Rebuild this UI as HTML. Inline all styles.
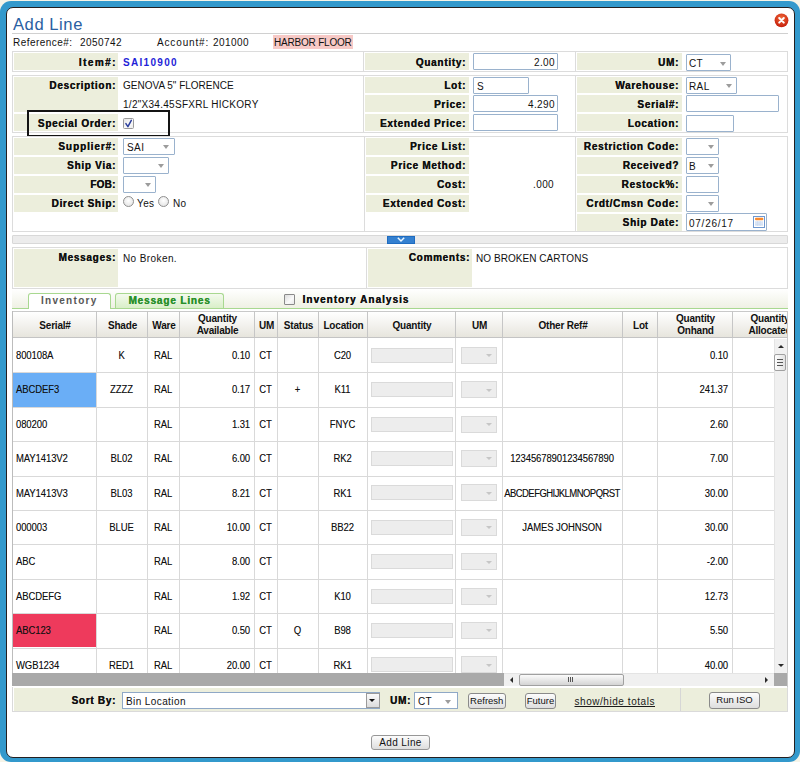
<!DOCTYPE html>
<html><head><meta charset="utf-8">
<style>
*{box-sizing:border-box;margin:0;padding:0}
html,body{width:800px;height:762px;overflow:hidden;background:#f6f4e8;font-family:"Liberation Sans",sans-serif;color:#111}
.a{position:absolute}
#frame{position:absolute;left:0;top:1px;width:800px;height:761px;background:#3399cc;border-radius:11px}
#inner{position:absolute;left:6px;top:7px;width:789px;height:751px;background:#fff;border:1.5px solid #231f20;border-radius:7px}
.t{position:absolute;white-space:pre;font-size:10px;line-height:12px;margin-top:1px}
.lb{text-shadow:0.25px 0 0 currentColor;position:absolute;white-space:pre;font-size:10px;line-height:12px;font-weight:bold;letter-spacing:0.7px;text-align:right;margin-top:0.8px}
.bg{position:absolute;background:#eceedc}
.box{position:absolute;border:1px solid #dcdcdc}
.vl{position:absolute;width:1px;background:#dcdcdc}
.inp{position:absolute;border:1px solid #9ab2cd;background:#fff;border-radius:1px}
.sel{position:absolute;border:1px solid #9ab2cd;background:#fff;border-radius:1px}
.arr{position:absolute;width:0;height:0;border-left:3.5px solid transparent;border-right:3.5px solid transparent;border-top:4px solid #9c9c9c;margin-left:0.5px;margin-top:0.5px}
.gh{background:linear-gradient(#ffffff,#e6e4dc)}
.gt{font-size:10px;line-height:11.2px;font-weight:bold;text-align:center;color:#111;letter-spacing:-0.2px}
.gd{font-size:9.5px;line-height:11px;white-space:pre;color:#111;letter-spacing:-0.1px;text-shadow:0.1px 0 0 rgba(0,0,0,0.35);transform:translateY(0.5px) scaleY(1.14);transform-origin:0 8.8px}
.dis{background:#ededed;border:1px solid #dadada}
.btn{border:1px solid #8a8a8a;border-radius:3px;background:linear-gradient(#fcfcfc,#dedede);font-size:9.5px;line-height:13px;text-align:center;color:#111;white-space:pre}
</style></head><body>
<div id="frame"></div>
<div id="inner"></div>

<!-- close icon -->
<svg class="a" style="left:774px;top:12.8px" width="15" height="15" viewBox="0 0 15 15">
<defs><radialGradient id="cg" cx="50%" cy="35%" r="60%"><stop offset="0" stop-color="#f26a3a"/><stop offset="1" stop-color="#c8240f"/></radialGradient></defs>
<circle cx="7.5" cy="7.3" r="6.9" fill="url(#cg)"/>
<path d="M5.2 5L9.8 9.6M9.8 5L5.2 9.6" stroke="#fff" stroke-width="2" stroke-linecap="round"/>
</svg>

<div class="t" style="left:13px;top:13.5px;font-size:16.6px;line-height:20px;color:#2a60a2;letter-spacing:0.55px">Add Line</div>
<div class="a" style="left:12px;top:33px;width:776px;height:1px;background:#d0d0d0"></div>

<div class="t" style="left:13px;top:36px;letter-spacing:0.45px">Reference#:</div>
<div class="t" style="left:80px;top:36px;letter-spacing:0.45px">2050742</div>
<div class="t" style="left:157px;top:36px;letter-spacing:0.85px">Account#:</div>
<div class="t" style="left:213px;top:36px;letter-spacing:0.45px">201000</div>
<div class="a" style="left:273px;top:35px;width:80px;height:14px;background:#f7c9c6"></div>
<div class="t" style="left:274px;top:36px;letter-spacing:-0.2px">HARBOR FLOOR</div>


<!-- ROW 1 -->
<div class="box" style="left:12px;top:51px;width:776px;height:21px"></div>
<div class="vl" style="left:363px;top:52px;height:19px"></div>
<div class="vl" style="left:575px;top:52px;height:19px"></div>
<div class="bg" style="left:14px;top:53px;width:104px;height:17px"></div>
<div class="bg" style="left:365px;top:53px;width:104px;height:17px"></div>
<div class="bg" style="left:577px;top:53px;width:105px;height:17px"></div>
<div class="lb" style="right:683.3px;top:56px;letter-spacing:1.4px">Item#:</div>
<div class="t" style="left:123px;top:56px;font-weight:bold;color:#1f1fd8;letter-spacing:1.3px">SAI10900</div>
<div class="lb" style="right:334px;top:56px">Quantity:</div>
<div class="inp" style="left:473px;top:53px;width:85px;height:17px"></div>
<div class="t" style="right:245px;top:56px;letter-spacing:0.4px">2.00</div>
<div class="lb" style="right:121px;top:56px">UM:</div>
<div class="sel" style="left:686px;top:54px;width:45px;height:17px"></div>
<div class="t" style="left:689px;top:57px;letter-spacing:0.4px">CT</div>
<div class="arr" style="left:719px;top:61px"></div>

<!-- ROW 2 -->
<div class="box" style="left:12px;top:75px;width:776px;height:58px"></div>
<div class="vl" style="left:363px;top:76px;height:56px"></div>
<div class="vl" style="left:575px;top:76px;height:56px"></div>
<div class="bg" style="left:14px;top:77px;width:104px;height:35px"></div>
<div class="bg" style="left:14px;top:114px;width:104px;height:17px"></div>
<div class="bg" style="left:365px;top:77px;width:104px;height:16px"></div>
<div class="bg" style="left:365px;top:95px;width:104px;height:17px"></div>
<div class="bg" style="left:365px;top:114px;width:104px;height:17px"></div>
<div class="bg" style="left:577px;top:77px;width:105px;height:16px"></div>
<div class="bg" style="left:577px;top:95px;width:105px;height:17px"></div>
<div class="bg" style="left:577px;top:114px;width:105px;height:17px"></div>
<div class="lb" style="right:684px;top:79px">Description:</div>
<div class="t" style="left:123px;top:79px;letter-spacing:0px">GENOVA 5" FLORENCE</div>
<div class="t" style="left:123px;top:97.5px;letter-spacing:0.28px">1/2"X34.45SFXRL HICKORY</div>
<div class="lb" style="right:684px;top:117px">Special Order:</div>
<div class="a" style="left:123px;top:117.5px;width:11px;height:11px;border:1px solid #9a9a9a;border-radius:1.5px;background:linear-gradient(135deg,#e4e4e4,#fafafa 55%,#ededed)"></div>
<svg class="a" style="left:123px;top:117.5px" width="11" height="11" viewBox="0 0 11 11"><path d="M2.9 5.6L4.9 8.6 8.3 2.4" fill="none" stroke="#2c3f9c" stroke-width="1.5" stroke-linecap="round" stroke-linejoin="round"/></svg>
<div class="a" style="left:27px;top:110px;width:143px;height:27px;border:2px solid #141414"></div>

<div class="lb" style="right:334px;top:79px">Lot:</div>
<div class="inp" style="left:473px;top:76.5px;width:56px;height:17px"></div>
<div class="t" style="left:477px;top:79.5px;letter-spacing:0.4px">S</div>
<div class="lb" style="right:334px;top:98px">Price:</div>
<div class="inp" style="left:473px;top:95px;width:85px;height:17px"></div>
<div class="t" style="right:245px;top:98px;letter-spacing:0.4px">4.290</div>
<div class="lb" style="right:334px;top:117px">Extended Price:</div>
<div class="inp" style="left:473px;top:114px;width:85px;height:17px"></div>

<div class="lb" style="right:121px;top:79px">Warehouse:</div>
<div class="sel" style="left:686px;top:76.5px;width:51px;height:17px"></div>
<div class="t" style="left:689px;top:79.5px;letter-spacing:0.4px">RAL</div>
<div class="arr" style="left:725px;top:83px"></div>
<div class="lb" style="right:121px;top:98px">Serial#:</div>
<div class="inp" style="left:686px;top:95px;width:93px;height:17px"></div>
<div class="lb" style="right:121px;top:117px">Location:</div>
<div class="inp" style="left:686px;top:114.5px;width:48px;height:17px"></div>

<!-- ROW 3 -->
<div class="box" style="left:12px;top:136px;width:776px;height:96px"></div>
<div class="vl" style="left:364px;top:137px;height:94px"></div>
<div class="vl" style="left:575px;top:137px;height:94px"></div>
<div class="bg" style="left:14px;top:138px;width:104px;height:17px"></div>
<div class="bg" style="left:14px;top:157px;width:104px;height:17px"></div>
<div class="bg" style="left:14px;top:176px;width:104px;height:17px"></div>
<div class="bg" style="left:14px;top:195px;width:104px;height:17px"></div>
<div class="bg" style="left:366px;top:138px;width:103px;height:17px"></div>
<div class="bg" style="left:366px;top:157px;width:103px;height:17px"></div>
<div class="bg" style="left:366px;top:176px;width:103px;height:17px"></div>
<div class="bg" style="left:366px;top:195px;width:103px;height:17px"></div>
<div class="bg" style="left:577px;top:138px;width:105px;height:17px"></div>
<div class="bg" style="left:577px;top:157px;width:105px;height:17px"></div>
<div class="bg" style="left:577px;top:176px;width:105px;height:17px"></div>
<div class="bg" style="left:577px;top:195px;width:105px;height:17px"></div>
<div class="bg" style="left:577px;top:214px;width:105px;height:17px"></div>

<div class="lb" style="right:683.8px;top:140px;letter-spacing:0.9px">Supplier#:</div>
<div class="sel" style="left:123px;top:138px;width:52px;height:17px"></div>
<div class="t" style="left:127px;top:141px;letter-spacing:0.4px">SAI</div>
<div class="arr" style="left:162px;top:144px"></div>
<div class="lb" style="right:684px;top:159px">Ship Via:</div>
<div class="sel" style="left:123px;top:156.5px;width:46px;height:17px"></div>
<div class="arr" style="left:157px;top:163px"></div>
<div class="lb" style="right:684.5px;top:178px;letter-spacing:0.2px">FOB:</div>
<div class="sel" style="left:123px;top:175.5px;width:33px;height:17px"></div>
<div class="arr" style="left:144px;top:182px"></div>
<div class="lb" style="right:684px;top:197px">Direct Ship:</div>
<div class="a" style="left:122.5px;top:195.5px;width:11px;height:11px;border-radius:50%;border:1px solid #8f8f8f;background:radial-gradient(circle at 50% 40%,#fff,#dedede)"></div>
<div class="t" style="left:137px;top:197px;letter-spacing:0.4px">Yes</div>
<div class="a" style="left:158px;top:195.5px;width:11px;height:11px;border-radius:50%;border:1px solid #8f8f8f;background:radial-gradient(circle at 50% 40%,#fff,#dedede)"></div>
<div class="t" style="left:173px;top:197px;letter-spacing:0.4px">No</div>

<div class="lb" style="right:334px;top:140px">Price List:</div>
<div class="lb" style="right:334px;top:159px">Price Method:</div>
<div class="lb" style="right:334px;top:178px">Cost:</div>
<div class="t" style="left:533px;top:178px;letter-spacing:0.4px">.000</div>
<div class="lb" style="right:334px;top:197px">Extended Cost:</div>

<div class="lb" style="right:121px;top:140px">Restriction Code:</div>
<div class="sel" style="left:686px;top:138px;width:33px;height:17px"></div>
<div class="arr" style="left:707px;top:144px"></div>
<div class="lb" style="right:121px;top:159px">Received?</div>
<div class="sel" style="left:686px;top:157px;width:33px;height:17px"></div>
<div class="t" style="left:689px;top:160px;letter-spacing:0.4px">B</div>
<div class="arr" style="left:707px;top:163px"></div>
<div class="lb" style="right:121px;top:178px">Restock%:</div>
<div class="inp" style="left:686px;top:175.5px;width:33px;height:17px"></div>
<div class="lb" style="right:121px;top:197px">Crdt/Cmsn Code:</div>
<div class="sel" style="left:686px;top:195px;width:33px;height:17px"></div>
<div class="arr" style="left:707px;top:201px"></div>
<div class="lb" style="right:121px;top:216px">Ship Date:</div>
<div class="inp" style="left:686px;top:213px;width:81px;height:17.5px"></div>
<div class="t" style="left:689px;top:216.5px;letter-spacing:0.75px">07/26/17</div>
<svg class="a" style="left:753px;top:216px" width="12" height="12" viewBox="0 0 12 12">
<rect x="0.5" y="0.5" width="11" height="11" fill="#fff" stroke="#6f98d0"/>
<rect x="2" y="1.8" width="8.3" height="2.4" rx="1" fill="#f88a30"/>
<rect x="2" y="5" width="8" height="5" fill="#e3ecf8"/>
<path d="M2 7H10M2 8.6H10M4.6 5V10M7.2 5V10" stroke="#c9daf0" stroke-width="0.7"/>
</svg>

<!-- collapse bar -->
<div class="a" style="left:12px;top:235px;width:776px;height:9px;background:#ececec;border:1px solid #d8d8d8;border-radius:1px"></div>
<div class="a" style="left:386.5px;top:235.5px;width:28.5px;height:8px;background:#3480d0;border:1px solid #1f6cc0"></div>
<svg class="a" style="left:396px;top:236px" width="10" height="7" viewBox="0 0 10 7"><path d="M1.8 1.8L5 5 8.2 1.8" fill="none" stroke="#eaf6ff" stroke-width="1.5"/></svg>

<!-- messages -->
<div class="box" style="left:12px;top:247px;width:776px;height:42px"></div>
<div class="vl" style="left:366px;top:248px;height:40px"></div>
<div class="bg" style="left:14px;top:249px;width:104px;height:38px"></div>
<div class="bg" style="left:368px;top:249px;width:104px;height:38px"></div>
<div class="lb" style="right:684px;top:251px">Messages:</div>
<div class="t" style="left:123px;top:252px;letter-spacing:0.4px">No Broken.</div>
<div class="lb" style="right:330px;top:251px">Comments:</div>
<div class="t" style="left:476px;top:252px;letter-spacing:0.05px">NO BROKEN CARTONS</div>
<!-- TABS -->
<div class="a" style="left:12px;top:289px;width:776px;height:20px;background:linear-gradient(#ffffff,#eef0e2)"></div>
<div class="a" style="left:12px;top:307.5px;width:776px;height:1.5px;background:#a8d890"></div>
<div class="a" style="left:27.5px;top:293px;width:83.5px;height:16px;background:#fff;border:1px solid #a8d890;border-bottom:none;border-radius:3px 3px 0 0"></div>
<div class="t" style="left:27.5px;width:83.5px;text-align:center;top:294.2px;font-weight:bold;color:#575757;letter-spacing:1.3px">Inventory</div>
<div class="a" style="left:115px;top:293px;width:109px;height:15px;background:linear-gradient(#f4faee,#d9efc8);border:1px solid #a8d890;border-bottom:none;border-radius:3px 3px 0 0"></div>
<div class="t" style="left:115px;width:109px;text-align:center;top:294.2px;font-weight:bold;color:#2a902a;letter-spacing:0.85px;text-shadow:0.25px 0 0 currentColor">Message Lines</div>
<div class="a" style="left:284px;top:294px;width:11px;height:11px;border:1px solid #8a8a8a;border-radius:1px;background:linear-gradient(135deg,#dcdcdc,#fafafa 60%,#e8e8e8)"></div>
<div class="t" style="left:302.5px;top:293.3px;font-weight:bold;color:#111;letter-spacing:1.02px;text-shadow:0.25px 0 0 currentColor">Inventory Analysis</div>

<!-- GRID -->
<div class="a" id="grid" style="left:12px;top:311px;width:776px;height:376px;overflow:hidden">
<div class="a" style="left:0;top:0;width:776px;height:1px;background:#c9c9c9"></div>
<div class="a gh" style="left:1px;top:1px;width:800px;height:26px"></div>
<div class="a gt" style="left:1px;width:84px;top:9.1px">Serial#</div>
<div class="a" style="left:84px;top:0;width:1px;height:26px;background:#c6c6c6"></div>
<div class="a gt" style="left:85px;width:51px;top:9.1px">Shade</div>
<div class="a" style="left:135px;top:0;width:1px;height:26px;background:#c6c6c6"></div>
<div class="a gt" style="left:136px;width:32px;top:9.1px">Ware</div>
<div class="a" style="left:167px;top:0;width:1px;height:26px;background:#c6c6c6"></div>
<div class="a gt" style="left:168px;width:75px;top:2.4px">Quantity<br>Available</div>
<div class="a" style="left:242px;top:0;width:1px;height:26px;background:#c6c6c6"></div>
<div class="a gt" style="left:243px;width:23px;top:9.1px">UM</div>
<div class="a" style="left:265px;top:0;width:1px;height:26px;background:#c6c6c6"></div>
<div class="a gt" style="left:266px;width:41px;top:9.1px">Status</div>
<div class="a" style="left:306px;top:0;width:1px;height:26px;background:#c6c6c6"></div>
<div class="a gt" style="left:307px;width:49px;top:9.1px">Location</div>
<div class="a" style="left:355px;top:0;width:1px;height:26px;background:#c6c6c6"></div>
<div class="a gt" style="left:356px;width:88px;top:9.1px">Quantity</div>
<div class="a" style="left:443px;top:0;width:1px;height:26px;background:#c6c6c6"></div>
<div class="a gt" style="left:444px;width:47px;top:9.1px">UM</div>
<div class="a" style="left:490px;top:0;width:1px;height:26px;background:#c6c6c6"></div>
<div class="a gt" style="left:491px;width:120px;top:9.1px">Other Ref#</div>
<div class="a" style="left:610px;top:0;width:1px;height:26px;background:#c6c6c6"></div>
<div class="a gt" style="left:611px;width:35px;top:9.1px">Lot</div>
<div class="a" style="left:645px;top:0;width:1px;height:26px;background:#c6c6c6"></div>
<div class="a gt" style="left:646px;width:75px;top:2.4px">Quantity<br>Onhand</div>
<div class="a" style="left:720px;top:0;width:1px;height:26px;background:#c6c6c6"></div>
<div class="a gt" style="left:721px;width:74px;top:2.4px">Quantity<br>Allocated</div>
<div class="a" style="left:0;top:25.5px;width:800px;height:1.5px;background:#c4c4c4"></div>
<div class="a" style="left:0;top:61.3px;width:800px;height:1px;background:#d9d9d9"></div>
<div class="a gd" style="left:4px;top:38.0px">800108A</div>
<div class="a gd" style="left:84px;width:51px;top:38.0px;text-align:center">K</div>
<div class="a gd" style="left:135px;width:32px;top:38.0px;text-align:center">RAL</div>
<div class="a gd" style="right:538px;top:38.0px;text-align:right">0.10</div>
<div class="a gd" style="left:242px;width:23px;top:38.0px;text-align:center">CT</div>
<div class="a gd" style="left:306px;width:49px;top:38.0px;text-align:center">C20</div>
<div class="a dis" style="left:358.5px;top:36.7px;width:82px;height:15px"></div>
<div class="a dis" style="left:449px;top:35.7px;width:36px;height:17px"></div>
<div class="a" style="left:474px;top:43.2px;width:0;height:0;border-left:3px solid transparent;border-right:3px solid transparent;border-top:3.5px solid #c6c6c6"></div>
<div class="a gd" style="right:60px;top:38.0px;text-align:right">0.10</div>
<div class="a" style="left:1px;top:62.3px;width:83px;height:33.4px;background:#6aaef6"></div>
<div class="a" style="left:0;top:95.7px;width:800px;height:1px;background:#d9d9d9"></div>
<div class="a gd" style="left:4px;top:72.4px">ABCDEF3</div>
<div class="a gd" style="left:84px;width:51px;top:72.4px;text-align:center">ZZZZ</div>
<div class="a gd" style="left:135px;width:32px;top:72.4px;text-align:center">RAL</div>
<div class="a gd" style="right:538px;top:72.4px;text-align:right">0.17</div>
<div class="a gd" style="left:242px;width:23px;top:72.4px;text-align:center">CT</div>
<div class="a gd" style="left:265px;width:41px;top:72.4px;text-align:center">+</div>
<div class="a gd" style="left:306px;width:49px;top:72.4px;text-align:center">K11</div>
<div class="a dis" style="left:358.5px;top:71.1px;width:82px;height:15px"></div>
<div class="a dis" style="left:449px;top:70.1px;width:36px;height:17px"></div>
<div class="a" style="left:474px;top:77.6px;width:0;height:0;border-left:3px solid transparent;border-right:3px solid transparent;border-top:3.5px solid #c6c6c6"></div>
<div class="a gd" style="right:60px;top:72.4px;text-align:right">241.37</div>
<div class="a" style="left:0;top:130.1px;width:800px;height:1px;background:#d9d9d9"></div>
<div class="a gd" style="left:4px;top:106.8px">080200</div>
<div class="a gd" style="left:135px;width:32px;top:106.8px;text-align:center">RAL</div>
<div class="a gd" style="right:538px;top:106.8px;text-align:right">1.31</div>
<div class="a gd" style="left:242px;width:23px;top:106.8px;text-align:center">CT</div>
<div class="a gd" style="left:306px;width:49px;top:106.8px;text-align:center">FNYC</div>
<div class="a dis" style="left:358.5px;top:105.5px;width:82px;height:15px"></div>
<div class="a dis" style="left:449px;top:104.5px;width:36px;height:17px"></div>
<div class="a" style="left:474px;top:112.0px;width:0;height:0;border-left:3px solid transparent;border-right:3px solid transparent;border-top:3.5px solid #c6c6c6"></div>
<div class="a gd" style="right:60px;top:106.8px;text-align:right">2.60</div>
<div class="a" style="left:0;top:164.5px;width:800px;height:1px;background:#d9d9d9"></div>
<div class="a gd" style="left:4px;top:141.2px">MAY1413V2</div>
<div class="a gd" style="left:84px;width:51px;top:141.2px;text-align:center">BL02</div>
<div class="a gd" style="left:135px;width:32px;top:141.2px;text-align:center">RAL</div>
<div class="a gd" style="right:538px;top:141.2px;text-align:right">6.00</div>
<div class="a gd" style="left:242px;width:23px;top:141.2px;text-align:center">CT</div>
<div class="a gd" style="left:306px;width:49px;top:141.2px;text-align:center">RK2</div>
<div class="a dis" style="left:358.5px;top:139.9px;width:82px;height:15px"></div>
<div class="a dis" style="left:449px;top:138.9px;width:36px;height:17px"></div>
<div class="a" style="left:474px;top:146.4px;width:0;height:0;border-left:3px solid transparent;border-right:3px solid transparent;border-top:3.5px solid #c6c6c6"></div>
<div class="a gd" style="left:490px;width:120px;top:141.2px;text-align:center">12345678901234567890</div>
<div class="a gd" style="right:60px;top:141.2px;text-align:right">7.00</div>
<div class="a" style="left:0;top:198.9px;width:800px;height:1px;background:#d9d9d9"></div>
<div class="a gd" style="left:4px;top:175.6px">MAY1413V3</div>
<div class="a gd" style="left:84px;width:51px;top:175.6px;text-align:center">BL03</div>
<div class="a gd" style="left:135px;width:32px;top:175.6px;text-align:center">RAL</div>
<div class="a gd" style="right:538px;top:175.6px;text-align:right">8.21</div>
<div class="a gd" style="left:242px;width:23px;top:175.6px;text-align:center">CT</div>
<div class="a gd" style="left:306px;width:49px;top:175.6px;text-align:center">RK1</div>
<div class="a dis" style="left:358.5px;top:174.3px;width:82px;height:15px"></div>
<div class="a dis" style="left:449px;top:173.3px;width:36px;height:17px"></div>
<div class="a" style="left:474px;top:180.8px;width:0;height:0;border-left:3px solid transparent;border-right:3px solid transparent;border-top:3.5px solid #c6c6c6"></div>
<div class="a gd" style="left:490px;width:120px;top:175.6px;text-align:center"><span style='letter-spacing:-0.55px'>ABCDEFGHIJKLMNOPQRST</span></div>
<div class="a gd" style="right:60px;top:175.6px;text-align:right">30.00</div>
<div class="a" style="left:0;top:233.3px;width:800px;height:1px;background:#d9d9d9"></div>
<div class="a gd" style="left:4px;top:210.0px">000003</div>
<div class="a gd" style="left:84px;width:51px;top:210.0px;text-align:center">BLUE</div>
<div class="a gd" style="left:135px;width:32px;top:210.0px;text-align:center">RAL</div>
<div class="a gd" style="right:538px;top:210.0px;text-align:right">10.00</div>
<div class="a gd" style="left:242px;width:23px;top:210.0px;text-align:center">CT</div>
<div class="a gd" style="left:306px;width:49px;top:210.0px;text-align:center">BB22</div>
<div class="a dis" style="left:358.5px;top:208.7px;width:82px;height:15px"></div>
<div class="a dis" style="left:449px;top:207.7px;width:36px;height:17px"></div>
<div class="a" style="left:474px;top:215.2px;width:0;height:0;border-left:3px solid transparent;border-right:3px solid transparent;border-top:3.5px solid #c6c6c6"></div>
<div class="a gd" style="left:490px;width:120px;top:210.0px;text-align:center">JAMES JOHNSON</div>
<div class="a gd" style="right:60px;top:210.0px;text-align:right">30.00</div>
<div class="a" style="left:0;top:267.7px;width:800px;height:1px;background:#d9d9d9"></div>
<div class="a gd" style="left:4px;top:244.4px">ABC</div>
<div class="a gd" style="left:135px;width:32px;top:244.4px;text-align:center">RAL</div>
<div class="a gd" style="right:538px;top:244.4px;text-align:right">8.00</div>
<div class="a gd" style="left:242px;width:23px;top:244.4px;text-align:center">CT</div>
<div class="a dis" style="left:358.5px;top:243.1px;width:82px;height:15px"></div>
<div class="a dis" style="left:449px;top:242.1px;width:36px;height:17px"></div>
<div class="a" style="left:474px;top:249.6px;width:0;height:0;border-left:3px solid transparent;border-right:3px solid transparent;border-top:3.5px solid #c6c6c6"></div>
<div class="a gd" style="right:60px;top:244.4px;text-align:right">-2.00</div>
<div class="a" style="left:0;top:302.1px;width:800px;height:1px;background:#d9d9d9"></div>
<div class="a gd" style="left:4px;top:278.8px">ABCDEFG</div>
<div class="a gd" style="left:135px;width:32px;top:278.8px;text-align:center">RAL</div>
<div class="a gd" style="right:538px;top:278.8px;text-align:right">1.92</div>
<div class="a gd" style="left:242px;width:23px;top:278.8px;text-align:center">CT</div>
<div class="a gd" style="left:306px;width:49px;top:278.8px;text-align:center">K10</div>
<div class="a dis" style="left:358.5px;top:277.5px;width:82px;height:15px"></div>
<div class="a dis" style="left:449px;top:276.5px;width:36px;height:17px"></div>
<div class="a" style="left:474px;top:284.0px;width:0;height:0;border-left:3px solid transparent;border-right:3px solid transparent;border-top:3.5px solid #c6c6c6"></div>
<div class="a gd" style="right:60px;top:278.8px;text-align:right">12.73</div>
<div class="a" style="left:1px;top:303.1px;width:83px;height:33.4px;background:#ee3a5c"></div>
<div class="a" style="left:0;top:336.5px;width:800px;height:1px;background:#d9d9d9"></div>
<div class="a gd" style="left:4px;top:313.2px">ABC123</div>
<div class="a gd" style="left:135px;width:32px;top:313.2px;text-align:center">RAL</div>
<div class="a gd" style="right:538px;top:313.2px;text-align:right">0.50</div>
<div class="a gd" style="left:242px;width:23px;top:313.2px;text-align:center">CT</div>
<div class="a gd" style="left:265px;width:41px;top:313.2px;text-align:center">Q</div>
<div class="a gd" style="left:306px;width:49px;top:313.2px;text-align:center">B98</div>
<div class="a dis" style="left:358.5px;top:311.9px;width:82px;height:15px"></div>
<div class="a dis" style="left:449px;top:310.9px;width:36px;height:17px"></div>
<div class="a" style="left:474px;top:318.4px;width:0;height:0;border-left:3px solid transparent;border-right:3px solid transparent;border-top:3.5px solid #c6c6c6"></div>
<div class="a gd" style="right:60px;top:313.2px;text-align:right">5.50</div>
<div class="a" style="left:0;top:370.9px;width:800px;height:1px;background:#d9d9d9"></div>
<div class="a gd" style="left:4px;top:347.6px">WGB1234</div>
<div class="a gd" style="left:84px;width:51px;top:347.6px;text-align:center">RED1</div>
<div class="a gd" style="left:135px;width:32px;top:347.6px;text-align:center">RAL</div>
<div class="a gd" style="right:538px;top:347.6px;text-align:right">20.00</div>
<div class="a gd" style="left:242px;width:23px;top:347.6px;text-align:center">CT</div>
<div class="a gd" style="left:306px;width:49px;top:347.6px;text-align:center">RK1</div>
<div class="a dis" style="left:358.5px;top:346.3px;width:82px;height:15px"></div>
<div class="a dis" style="left:449px;top:345.3px;width:36px;height:17px"></div>
<div class="a" style="left:474px;top:352.8px;width:0;height:0;border-left:3px solid transparent;border-right:3px solid transparent;border-top:3.5px solid #c6c6c6"></div>
<div class="a gd" style="right:60px;top:347.6px;text-align:right">40.00</div>
<div class="a" style="left:84px;top:27px;width:1px;height:335px;background:#d9d9d9"></div>
<div class="a" style="left:135px;top:27px;width:1px;height:335px;background:#d9d9d9"></div>
<div class="a" style="left:167px;top:27px;width:1px;height:335px;background:#d9d9d9"></div>
<div class="a" style="left:242px;top:27px;width:1px;height:335px;background:#d9d9d9"></div>
<div class="a" style="left:265px;top:27px;width:1px;height:335px;background:#d9d9d9"></div>
<div class="a" style="left:306px;top:27px;width:1px;height:335px;background:#d9d9d9"></div>
<div class="a" style="left:355px;top:27px;width:1px;height:335px;background:#d9d9d9"></div>
<div class="a" style="left:443px;top:27px;width:1px;height:335px;background:#d9d9d9"></div>
<div class="a" style="left:490px;top:27px;width:1px;height:335px;background:#d9d9d9"></div>
<div class="a" style="left:610px;top:27px;width:1px;height:335px;background:#d9d9d9"></div>
<div class="a" style="left:645px;top:27px;width:1px;height:335px;background:#d9d9d9"></div>
<div class="a" style="left:720px;top:27px;width:1px;height:335px;background:#d9d9d9"></div>
<div class="a" style="left:762px;top:28px;width:13px;height:334px;background:#f0f0f0;border-left:1px solid #e4e4e4"></div>
<div class="a" style="left:765.5px;top:34px;width:0;height:0;border-left:3.5px solid transparent;border-right:3.5px solid transparent;border-bottom:3.5px solid #2a2a2a"></div>
<div class="a" style="left:762px;top:43px;width:12px;height:17px;border:1px solid #a0a0a0;border-radius:2px;background:linear-gradient(90deg,#fdfdfd,#e2e2e2)"></div>
<div class="a" style="left:765px;top:47.5px;width:6px;height:1px;background:#555;box-shadow:0 3px 0 #555,0 6px 0 #555"></div>
<div class="a" style="left:765.5px;top:352.5px;width:0;height:0;border-left:3.5px solid transparent;border-right:3.5px solid transparent;border-top:3.5px solid #2a2a2a"></div>
<div class="a" style="left:0;top:362px;width:800px;height:13px;background:#a9a9a9"></div>
<div class="a" style="left:492px;top:362px;width:270px;height:13px;background:#f0f0f0;border-top:1px solid #e4e4e4"></div>
<div class="a" style="left:498px;top:365.5px;width:0;height:0;border-top:3px solid transparent;border-bottom:3px solid transparent;border-right:3.5px solid #2a2a2a"></div>
<div class="a" style="left:507px;top:362.5px;width:105px;height:12.5px;border:1px solid #a0a0a0;border-radius:2px;background:linear-gradient(#fbfbfb,#d4d4d4)"></div>
<div class="a" style="left:556px;top:366px;width:1px;height:5px;background:#555;box-shadow:2px 0 0 #555,4px 0 0 #555"></div>
<div class="a" style="left:753px;top:365.5px;width:0;height:0;border-top:3px solid transparent;border-bottom:3px solid transparent;border-left:3.5px solid #2a2a2a"></div>
<div class="a" style="left:0;top:0;width:1px;height:362px;background:#bcbcbc"></div>
<div class="a" style="left:775px;top:0;width:1px;height:376px;background:#c9c9c9"></div>
</div>

<!-- FOOTER -->
<div class="a" style="left:12px;top:687px;width:776px;height:25px;border:1px solid #dadada;border-top:none;background:#fff"></div>
<div class="bg" style="left:13.5px;top:688px;width:773px;height:23px"></div>
<div class="vl" style="left:680px;top:688px;height:23px;background:#d6d6d6"></div>
<div class="lb" style="right:684px;top:694.5px">Sort By:</div>
<div class="a" style="left:122px;top:692px;width:258px;height:17px;border:1px solid #8fa8c6;background:#fff"></div>
<div class="t" style="left:126px;top:695px;letter-spacing:0.4px">Bin Location</div>
<div class="a" style="left:365.5px;top:693px;width:14px;height:15px;border:1px solid #9a9a9a;background:linear-gradient(#fbfbfb,#dcdcdc)"></div>
<div class="a" style="left:369px;top:699px;width:0;height:0;border-left:3.5px solid transparent;border-right:3.5px solid transparent;border-top:3.5px solid #111"></div>
<div class="lb" style="left:390px;top:694.5px;text-align:left">UM:</div>
<div class="a" style="left:414px;top:692px;width:44px;height:17px;border:1px solid #8fa8c6;background:#fff"></div>
<div class="t" style="left:418px;top:695px;letter-spacing:0.4px">CT</div>
<div class="arr" style="left:444px;top:699px"></div>
<div class="a btn" style="left:468px;top:693px;width:37.5px;height:16px">Refresh</div>
<div class="a btn" style="left:525px;top:693px;width:31px;height:16px">Future</div>
<div class="t" style="left:574.5px;top:695px;letter-spacing:0.55px;text-decoration:underline;color:#1a1a1a">show/hide totals</div>
<div class="a btn" style="left:709px;top:692px;width:51px;height:17px">Run ISO</div>

<div class="a btn" style="left:371px;top:735px;width:59px;height:15px;font-size:10px;letter-spacing:0.4px;border-color:#979797">Add Line</div>

</body></html>
